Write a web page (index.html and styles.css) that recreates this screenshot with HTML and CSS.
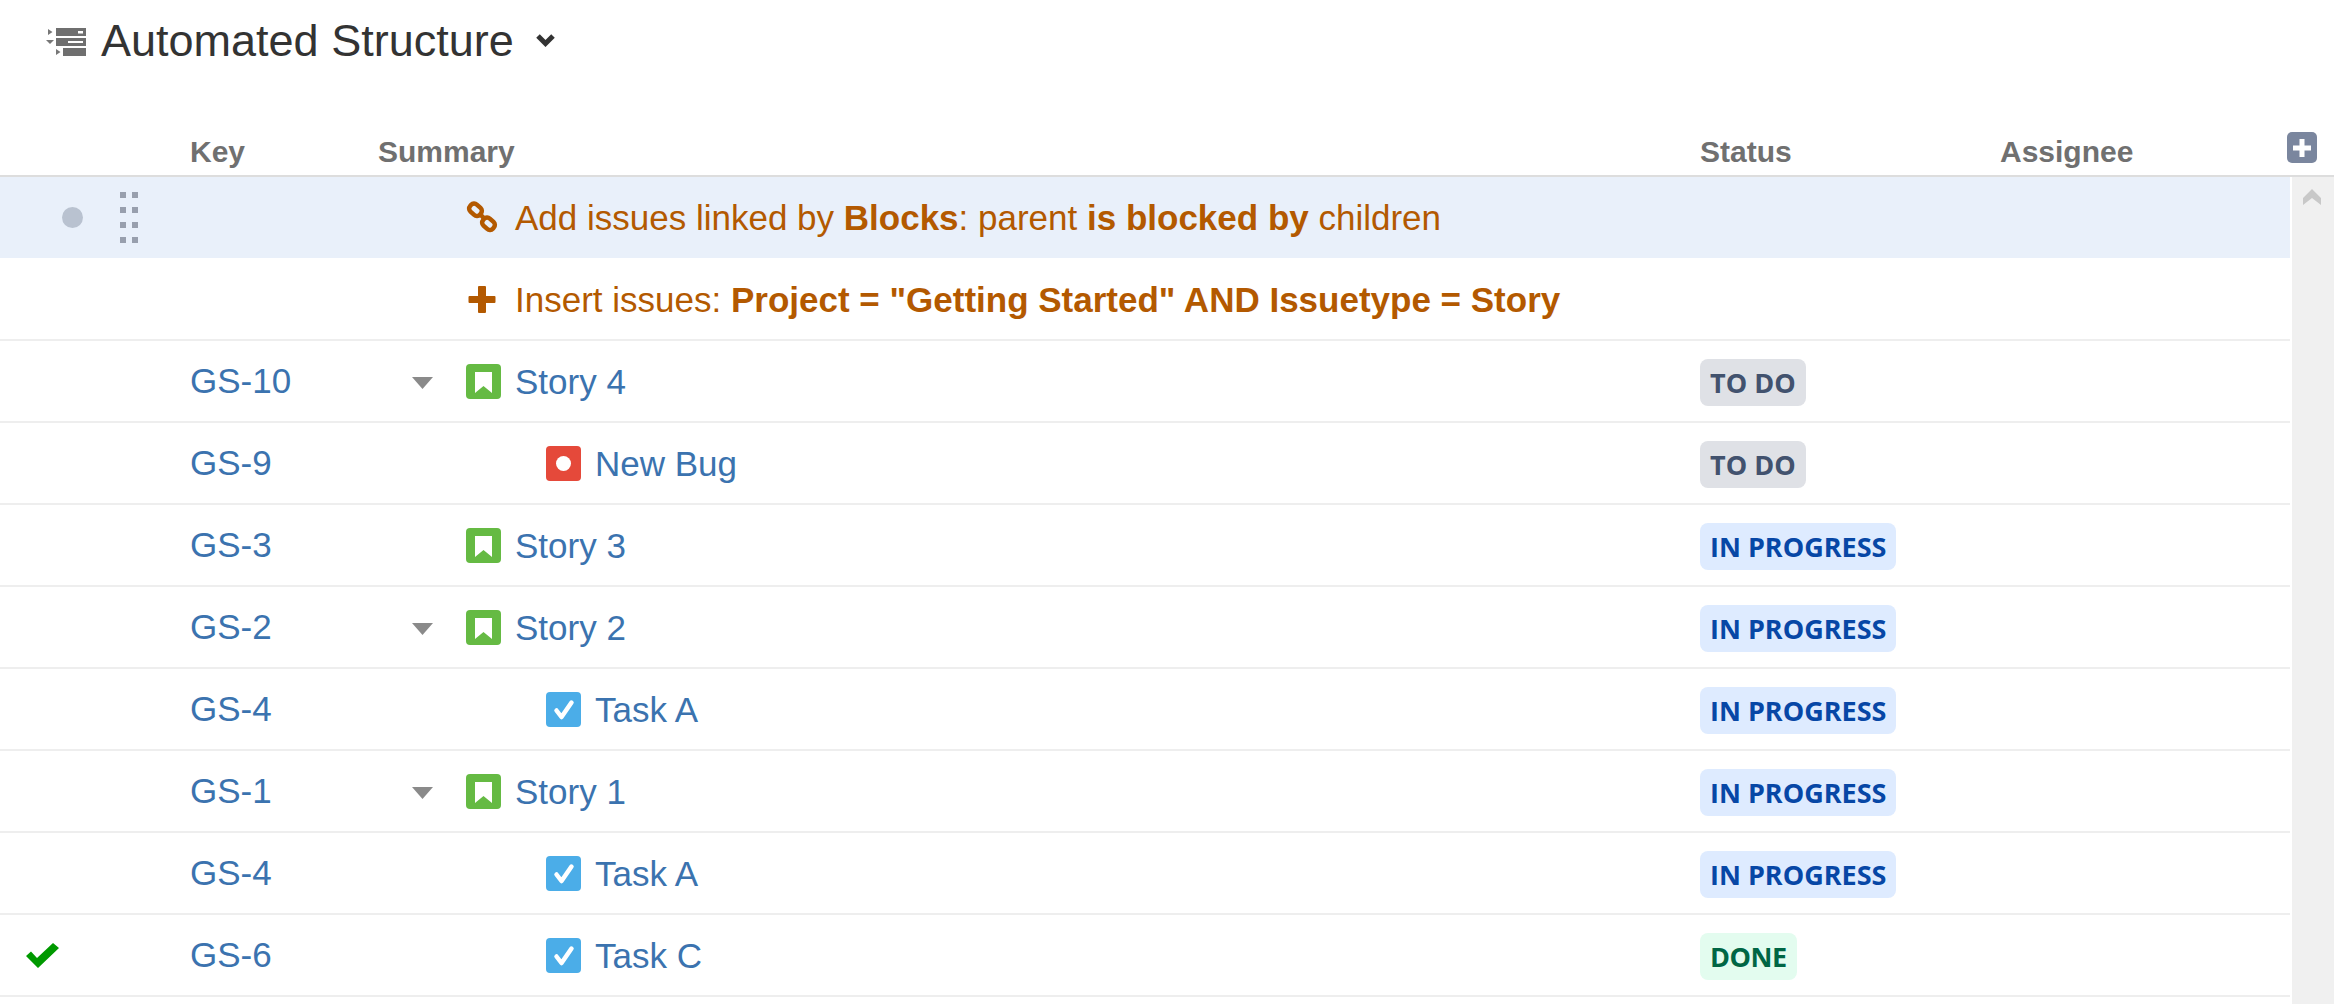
FILE: index.html
```html
<!DOCTYPE html>
<html lang="en">
<head>
    <meta charset="UTF-8">
    <title>Automated Structure</title>
    <link rel="stylesheet" href="styles.css">
</head>
<body>
    <svg class="icon-defs" width="0" height="0">
        <symbol id="i-story" viewBox="0 0 35 35">
            <rect width="35" height="35" rx="4" fill="#65ba43"/>
            <path d="M9 8h17v21l-8.500-7L9 29z" fill="#fff"/>
        </symbol>
        <symbol id="i-bug" viewBox="0 0 35 35">
            <rect width="35" height="35" rx="4" fill="#e5493a"/>
            <circle cx="17.500" cy="17.500" r="7.500" fill="#fff"/>
        </symbol>
        <symbol id="i-task" viewBox="0 0 35 35">
            <rect width="35" height="35" rx="4" fill="#4bade8"/>
            <path d="M10.500 18.500l5 6.500 10-14.500" fill="none" stroke="#fff" stroke-width="4.500" stroke-linecap="round" stroke-linejoin="round"/>
        </symbol>
        <symbol id="i-toggle" viewBox="0 0 21 12">
            <path d="M0 0h21L10.500 12z" fill="#8a8a8a"/>
        </symbol>
    </svg>

    <header class="title-bar">
        <svg class="structure-icon" width="40" height="28" viewBox="0 0 40 28">
            <path d="M2 1l4.500 3L2 7zM0 12h8l-4 4zM10 21l4.500 3-4.500 3z" fill="#777"/>
            <path fill-rule="evenodd" d="M10 0h30v8H10zM32 3v2.500h5V3zM10 10h30v8H10zM22 13v2h15v-2zM17 20h23v8H17z" fill="#6f6f6f"/>
        </svg>
        <h1>Automated Structure</h1>
        <svg class="title-arrow" width="21" height="14" viewBox="0 0 21 14">
            <path d="M3 3l7.500 7.500L18 3" fill="none" stroke="#333" stroke-width="5"/>
        </svg>
    </header>

    <div class="col-head">
        <div class="col-mark"></div>
        <div class="col-key">Key</div>
        <div class="col-summary">Summary</div>
        <div class="col-status">Status</div>
        <div class="col-assignee">Assignee</div>
        <button class="add-col" aria-label="Add column">
            <svg width="18" height="18" viewBox="0 0 18 18"><path d="M6.500 0h5v6.500H18v5h-6.500V18h-5v-6.500H0v-5h6.500z" fill="#fff"/></svg>
        </button>
    </div>

    <div class="grid-wrap">
        <div class="rows">
            <div class="row row-active">
                <div class="col-mark">
                    <span class="dot"></span>
                    <span class="grip"><i></i><i></i><i></i><i></i><i></i><i></i><i></i><i></i></span>
                </div>
                <div class="col-key"></div>
                <div class="col-summary gen">
                    <span class="indent-1">
                        <svg class="gen-icon" width="33" height="33" viewBox="0 0 33 33">
                            <g fill="none" stroke="#b35900" stroke-width="4.500">
                                <rect x="3" y="4" width="13" height="9.500" rx="4" transform="rotate(42 9.500 8.750)"/>
                                <rect x="16" y="18" width="13" height="9.500" rx="4" transform="rotate(42 22.500 22.750)"/>
                                <path d="M14 13l5 5.500"/>
                            </g>
                        </svg>
                    </span>
                    <span>Add issues linked by <b>Blocks</b>: parent <b>is blocked by</b> children</span>
                </div>
                <div class="col-status"></div>
                <div class="col-assignee"></div>
            </div>

            <div class="row">
                <div class="col-mark"></div>
                <div class="col-key"></div>
                <div class="col-summary gen">
                    <span class="indent-1">
                        <svg class="gen-icon" width="33" height="33" viewBox="0 0 33 33">
                            <path d="M13 3h6a1 1 0 0 1 1 1v9h8.500a1 1 0 0 1 1 1v5a1 1 0 0 1-1 1H20v9a1 1 0 0 1-1 1h-6a1 1 0 0 1-1-1v-9H3.500a1 1 0 0 1-1-1v-5a1 1 0 0 1 1-1H12V4a1 1 0 0 1 1-1z" fill="#b35900"/>
                        </svg>
                    </span>
                    <span class="text-low">Insert issues: <b>Project = "Getting Started" AND Issuetype = Story</b></span>
                </div>
                <div class="col-status"></div>
                <div class="col-assignee"></div>
            </div>

            <div class="row">
                <div class="col-mark"></div>
                <div class="col-key"><a href="#">GS-10</a></div>
                <div class="col-summary">
                    <svg class="toggle" width="21" height="12"><use href="#i-toggle"/></svg>
                    <svg class="type-icon" width="35" height="35"><use href="#i-story"/></svg>
                    <a href="#">Story 4</a>
                </div>
                <div class="col-status"><span class="lozenge todo">TO DO</span></div>
                <div class="col-assignee"></div>
            </div>

            <div class="row">
                <div class="col-mark"></div>
                <div class="col-key"><a href="#">GS-9</a></div>
                <div class="col-summary depth-2">
                    <svg class="type-icon" width="35" height="35"><use href="#i-bug"/></svg>
                    <a href="#">New Bug</a>
                </div>
                <div class="col-status"><span class="lozenge todo">TO DO</span></div>
                <div class="col-assignee"></div>
            </div>

            <div class="row">
                <div class="col-mark"></div>
                <div class="col-key"><a href="#">GS-3</a></div>
                <div class="col-summary depth-1">
                    <svg class="type-icon" width="35" height="35"><use href="#i-story"/></svg>
                    <a href="#">Story 3</a>
                </div>
                <div class="col-status"><span class="lozenge progress">IN PROGRESS</span></div>
                <div class="col-assignee"></div>
            </div>

            <div class="row">
                <div class="col-mark"></div>
                <div class="col-key"><a href="#">GS-2</a></div>
                <div class="col-summary">
                    <svg class="toggle" width="21" height="12"><use href="#i-toggle"/></svg>
                    <svg class="type-icon" width="35" height="35"><use href="#i-story"/></svg>
                    <a href="#">Story 2</a>
                </div>
                <div class="col-status"><span class="lozenge progress">IN PROGRESS</span></div>
                <div class="col-assignee"></div>
            </div>

            <div class="row">
                <div class="col-mark"></div>
                <div class="col-key"><a href="#">GS-4</a></div>
                <div class="col-summary depth-2">
                    <svg class="type-icon" width="35" height="35"><use href="#i-task"/></svg>
                    <a href="#">Task A</a>
                </div>
                <div class="col-status"><span class="lozenge progress">IN PROGRESS</span></div>
                <div class="col-assignee"></div>
            </div>

            <div class="row">
                <div class="col-mark"></div>
                <div class="col-key"><a href="#">GS-1</a></div>
                <div class="col-summary">
                    <svg class="toggle" width="21" height="12"><use href="#i-toggle"/></svg>
                    <svg class="type-icon" width="35" height="35"><use href="#i-story"/></svg>
                    <a href="#">Story 1</a>
                </div>
                <div class="col-status"><span class="lozenge progress">IN PROGRESS</span></div>
                <div class="col-assignee"></div>
            </div>

            <div class="row">
                <div class="col-mark"></div>
                <div class="col-key"><a href="#">GS-4</a></div>
                <div class="col-summary depth-2">
                    <svg class="type-icon" width="35" height="35"><use href="#i-task"/></svg>
                    <a href="#">Task A</a>
                </div>
                <div class="col-status"><span class="lozenge progress">IN PROGRESS</span></div>
                <div class="col-assignee"></div>
            </div>

            <div class="row">
                <div class="col-mark">
                    <svg class="done-check" width="33" height="25" viewBox="0 0 33 25">
                        <path d="M0 13l5-4.500 6 6.500L27 0l6 5-21 20z" fill="#009900"/>
                    </svg>
                </div>
                <div class="col-key"><a href="#">GS-6</a></div>
                <div class="col-summary depth-2">
                    <svg class="type-icon" width="35" height="35"><use href="#i-task"/></svg>
                    <a href="#">Task C</a>
                </div>
                <div class="col-status"><span class="lozenge done">DONE</span></div>
                <div class="col-assignee"></div>
            </div>
        </div>

        <div class="scroll-track">
            <svg width="18" height="16" viewBox="0 0 18 16"><path d="M9 0l9 9v7L9 9l-9 7V9z" fill="#c8c8c8"/></svg>
        </div>
    </div>
</body>
</html>
```
FILE: styles.css
```css
* {
    margin: 0;
    padding: 0;
    box-sizing: border-box;
}

html, body {
    height: 1004px;
    overflow: hidden;
}

body {
    font-family: "Liberation Sans", Arial, sans-serif;
    background: #fff;
    color: #333;
}

.icon-defs {
    position: absolute;
}

a {
    color: #3b73af;
    text-decoration: none;
}

.title-bar {
    display: flex;
    align-items: center;
    height: 84px;
    padding-left: 46px;
}

.structure-icon {
    margin-right: 15px;
}

.title-bar h1 {
    margin-bottom: 3px;
    font-size: 45px;
    font-weight: 400;
    line-height: 56px;
}

.title-arrow {
    margin: 0 0 4px 21px;
}

.col-head {
    display: flex;
    align-items: center;
    position: relative;
    height: 93px;
    padding-top: 44px;
    border-bottom: 2px solid #ddd;
    font-size: 30px;
    font-weight: 700;
    color: #707070;
}

.add-col {
    position: absolute;
    right: 17px;
    top: 48px;
    display: flex;
    align-items: center;
    justify-content: center;
    width: 30px;
    height: 31px;
    border: none;
    border-radius: 5px;
    background: #7a869e;
}

.grid-wrap {
    display: flex;
    justify-content: space-between;
}

.rows {
    width: 2290px;
}

.row {
    display: flex;
    align-items: center;
    height: 82px;
    border-bottom: 2px solid #eee;
    font-size: 35px;
}

.row-active {
    background: #e9f0fa;
    border-bottom: 1px solid #fff;
}

.col-mark {
    display: flex;
    align-items: center;
    flex: none;
    width: 190px;
    height: 100%;
    position: relative;
}

.col-key {
    flex: none;
    width: 188px;
}

.row .col-key a,
.col-summary a,
.text-low {
    padding-top: 2px;
}

.col-summary {
    display: flex;
    align-items: center;
    flex: none;
    width: 1322px;
}

.col-status {
    flex: none;
    width: 300px;
}

.col-assignee {
    flex: 1;
}

.depth-1 {
    padding-left: 88px;
}

.depth-2 {
    padding-left: 168px;
}

.indent-1 {
    display: flex;
    padding-left: 88px;
}

.gen {
    color: #b35900;
}

.gen-icon {
    flex: none;
    margin-right: 16px;
    overflow: visible;
}

.toggle {
    flex: none;
    margin: 4px 33px 0 34px;
}

.type-icon {
    flex: none;
    margin-right: 14px;
}

.dot {
    width: 21px;
    height: 21px;
    margin-left: 62px;
    border-radius: 50%;
    background: #b9c2d0;
}

.grip {
    display: grid;
    grid-template-columns: 6px 6px;
    gap: 9px 6px;
    margin-left: 37px;
}

.grip i {
    width: 6px;
    height: 6px;
    background: #989fad;
}

.done-check {
    margin-left: 26px;
}

.lozenge {
    display: block;
    width: max-content;
    height: 47px;
    margin-top: 3px;
    padding: 0 10px;
    border-radius: 8px;
    font-family: "Open Sans", sans-serif;
    font-size: 27px;
    font-weight: 700;
    line-height: 47px;
}

.todo {
    background: #dfe1e6;
    color: #42526e;
}

.progress {
    background: #deebff;
    color: #0747a6;
}

.done {
    background: #e3fcef;
    color: #006644;
    letter-spacing: -0.5px;
}

.scroll-track {
    display: flex;
    justify-content: center;
    align-items: flex-start;
    width: 42px;
    height: 827px;
    padding: 12px 2px 0 0;
    background: #f0f0f0;
}
```
